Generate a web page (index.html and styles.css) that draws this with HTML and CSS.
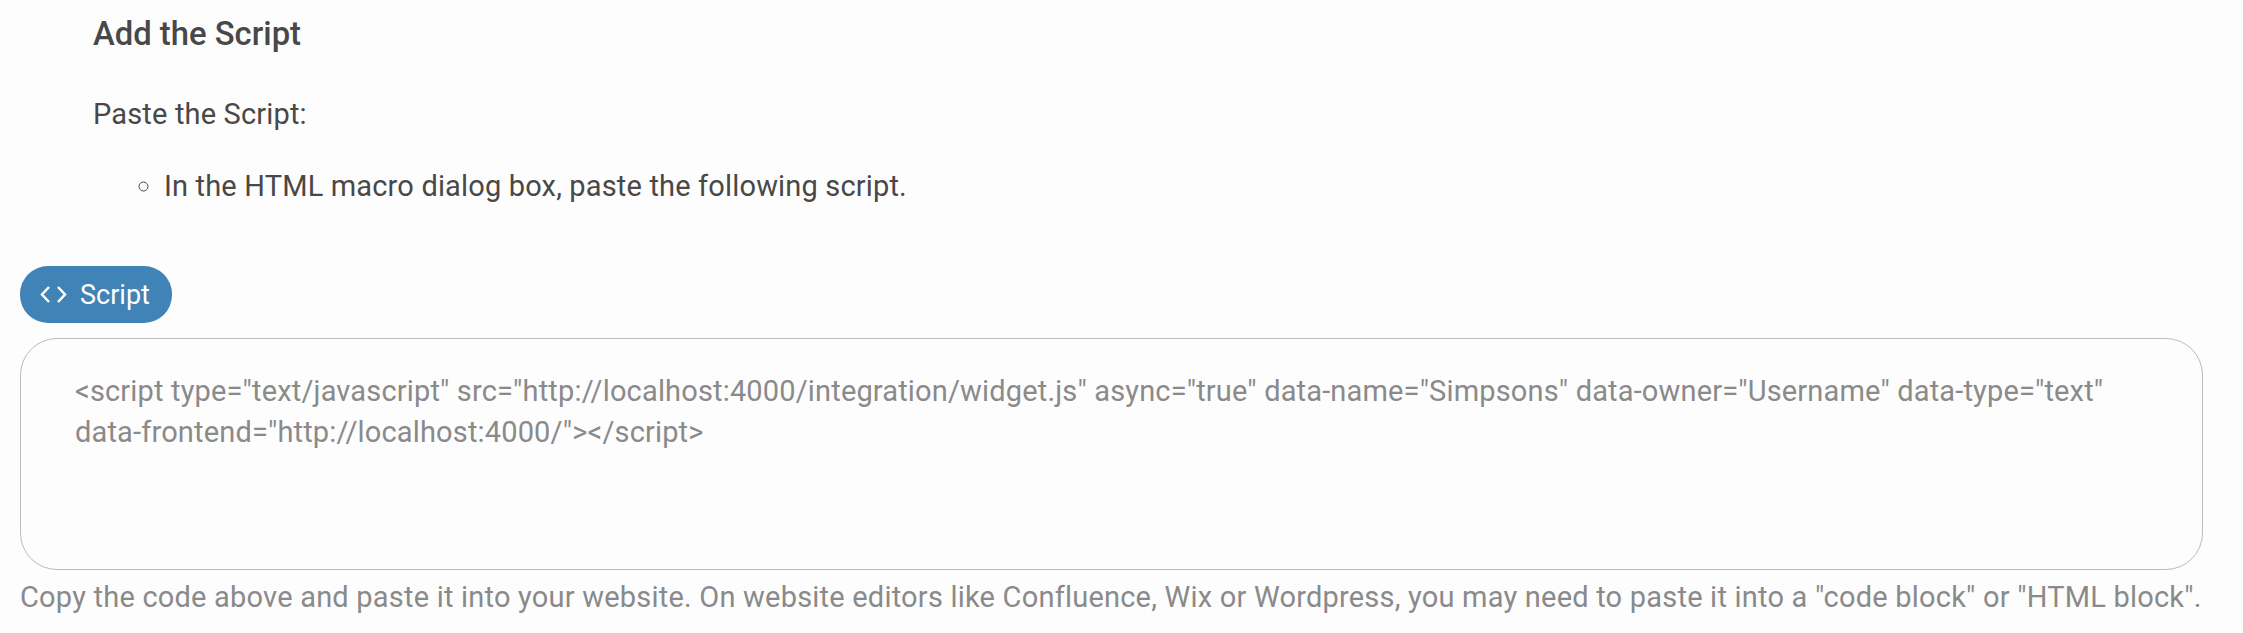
FILE: index.html
```html
<!DOCTYPE html>
<html lang="en">
  <head>
    <meta charset="UTF-8" />
    <meta name="viewport" content="width=device-width, initial-scale=1.0" />
    <title>Add the Script</title>
    <link rel="stylesheet" href="styles.css">
  </head>
  <body>
    <div class="steps">
      <h3 class="steps-title">Add the Script</h3>
      <p class="steps-text">Paste the Script:</p>
      <ul class="steps-list">
        <li>In the HTML macro dialog box, paste the following script.</li>
      </ul>
    </div>

    <div class="embed">
      <button class="embed-tab" type="button">
        <svg class="embed-icon" viewBox="0 0 27 17" width="27" height="17" aria-hidden="true">
          <path d="M9 1 2 8.500 9 16M18 1l7 7.500L18 16" />
        </svg>
        <span>Script</span>
      </button>
      <div class="embed-code">&lt;script type="text/javascript" src="http://localhost:4000/integration/widget.js" async="true" data-name="Simpsons" data-owner="Username" data-type="text"<br>data-frontend="http://localhost:4000/"&gt;&lt;/script&gt;</div>
      <p class="embed-help">Copy the code above and paste it into your website. On website editors like Confluence, Wix or Wordpress, you may need to paste it into a "code block" or "HTML block".</p>
    </div>
  </body>
</html>
```

FILE: styles.css
```css
body
{
  margin: 0;
  background-color: #fdfdfd;
  color: #484848;
  font-family: Roboto, "Liberation Sans", sans-serif;
  font-size: 29px;
  letter-spacing: 0.16px;
}
.steps
{
  padding: 14px 0 0 93px;
}
.steps-title
{
  margin: 0;
  font-size: 32.8px;
  font-weight: 500;
  line-height: 40px;
  letter-spacing: 0;
}
.steps-text
{
  margin: 40px 0 0;
  line-height: 41px;
}
.steps-list
{
  margin: 31px 0 0;
  padding-left: 71px;
  line-height: 41px;
  list-style-type: circle;
}
.embed
{
  padding: 0 20px;
  margin-top: 59px;
}
.embed-tab
{
  display: flex;
  align-items: center;
  gap: 13px;
  height: 57px;
  width: 152px;
  padding: 0 0 0 20px;
  border: none;
  border-radius: 28px;
  background-color: #3f83b7;
  color: white;
  font-family: inherit;
  font-size: 27px;
}
.embed-icon
{
  fill: none;
  stroke: white;
  stroke-width: 2.5;
}
.embed-code
{
  box-sizing: border-box;
  width: 2183px;
  height: 232px;
  margin-top: 15px;
  padding: 32px 54px;
  border: 1px solid #bbb;
  border-radius: 37px;
  color: #8a8a8a;
  line-height: 41px;
}
.embed-help
{
  margin: 7px 0 0;
  color: #8a8a8a;
  line-height: 41px;
  letter-spacing: 0.21px;
  white-space: nowrap;
}
```
